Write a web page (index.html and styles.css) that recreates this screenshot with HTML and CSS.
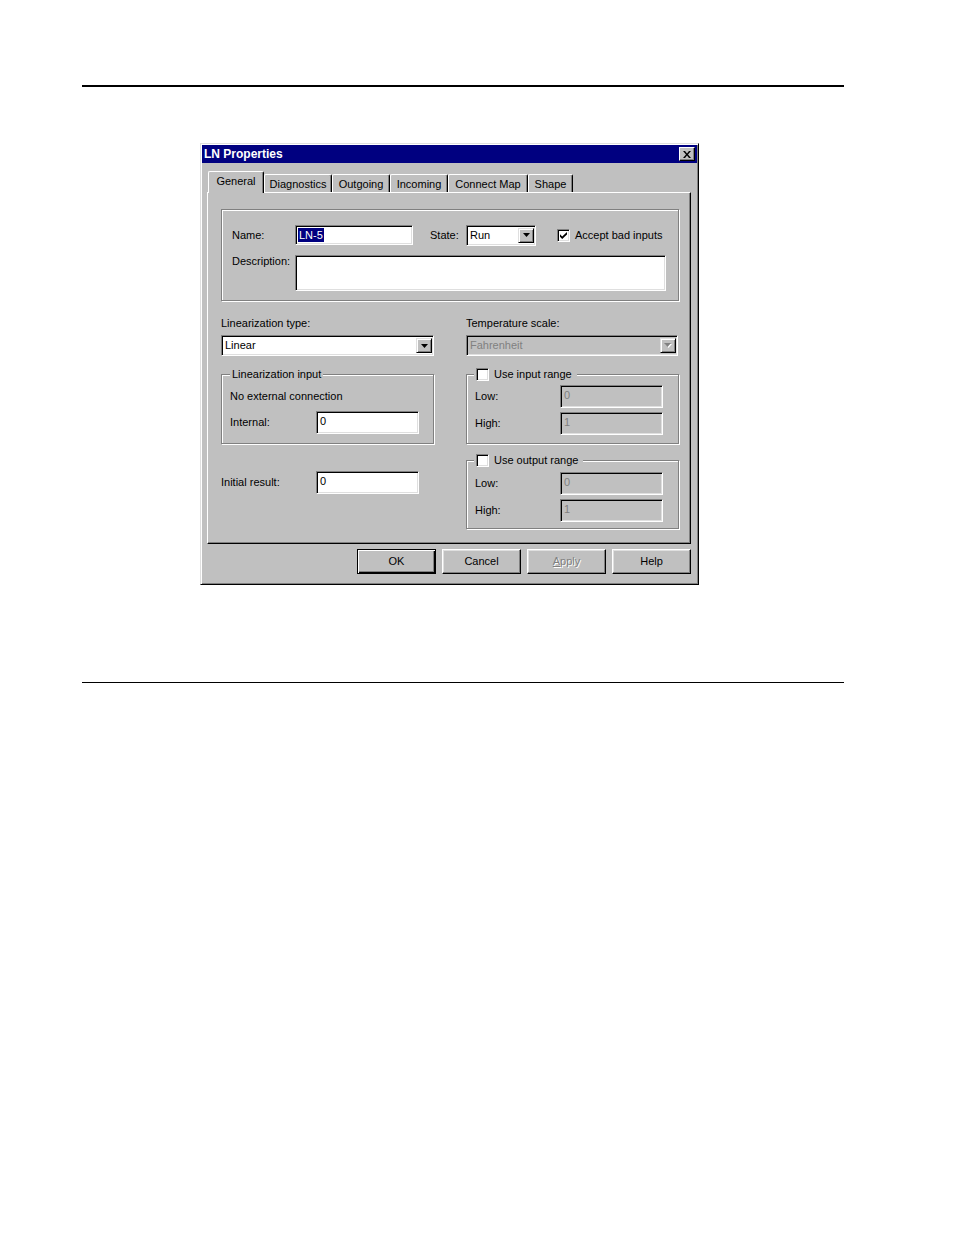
FILE: index.html
```html
<!DOCTYPE html>
<html lang="en">
<head>
<meta charset="utf-8">
<title>LN Properties</title>
<link rel="stylesheet" href="styles.css">
</head>
<body>
<div class="rule rule-top"></div>

<div class="dialog">
  <div class="titlebar">
    <span class="title">LN Properties</span>
    <span class="close">
      <svg width="8" height="7" viewBox="0 0 8 7"><path d="M0 0h2l2 2.4L6 0h2L5 3.5 8 7H6L4 4.6 2 7H0l3-3.5z" fill="#000"/></svg>
    </span>
  </div>

  <div class="tabs">
    <div class="tab tab-sel w-gen">General</div>
    <div class="tab w-diag">Diagnostics</div>
    <div class="tab w-out">Outgoing</div>
    <div class="tab w-inc">Incoming</div>
    <div class="tab w-con">Connect Map</div>
    <div class="tab w-shape">Shape</div>
  </div>

  <div class="panel">
    <fieldset class="grp grp-top">
      <div class="row r1">
        <span class="lbl lbl-name">Name:</span>
        <span class="field f-name"><span class="hl">LN-5</span></span>
        <span class="lbl lbl-state">State:</span>
        <span class="field combo f-state">
          <span class="val">Run</span>
          <span class="drop"><svg width="7" height="4" viewBox="0 0 7 4"><path d="M0 0h7L3.5 4z" fill="#000"/></svg></span>
        </span>
        <span class="chk chk-accept"><svg width="7" height="7" viewBox="0 0 7 7"><path d="M0 2.2 2.2 4.4 7 0v2.6L2.2 7 0 4.8z" fill="#000"/></svg></span>
        <span class="chk-lbl">Accept bad inputs</span>
      </div>
      <div class="row r2">
        <span class="lbl lbl-name">Description:</span>
        <span class="field f-desc"></span>
      </div>
    </fieldset>

    <div class="cols">
      <div class="cell">
        <div class="cap">Linearization type:</div>
        <div class="field combo f-wide">
          <span class="val">Linear</span>
          <span class="drop"><svg width="7" height="4" viewBox="0 0 7 4"><path d="M0 0h7L3.5 4z" fill="#000"/></svg></span>
        </div>
      </div>
      <div class="cell">
        <div class="cap">Temperature scale:</div>
        <div class="field combo f-wide disabled">
          <span class="val">Fahrenheit</span>
          <span class="drop"><svg width="8" height="5" viewBox="0 0 8 5"><path d="M1 1h7L4.5 5z" fill="#fff"/><path d="M0 0h7L3.5 4z" fill="#808080"/></svg></span>
        </div>
      </div>

      <fieldset class="grp grp-lin">
        <legend class="lg lg-lin">Linearization input</legend>
        <div class="note">No external connection</div>
        <div class="row r-int">
          <span class="lbl lbl-int">Internal:</span>
          <span class="field f-num">0</span>
        </div>
      </fieldset>

      <fieldset class="grp grp-rng">
        <legend class="lg lg-rng"><span class="lg-in"><span class="chk"></span>Use input range</span></legend>
        <div class="row">
          <span class="lbl lbl-rng">Low:</span>
          <span class="field f-num disabled">0</span>
        </div>
        <div class="row r-next">
          <span class="lbl lbl-rng">High:</span>
          <span class="field f-num disabled">1</span>
        </div>
      </fieldset>

      <div class="cell init">
        <div class="row">
          <span class="lbl lbl-init">Initial result:</span>
          <span class="field f-num">0</span>
        </div>
      </div>

      <fieldset class="grp grp-rng grp-out">
        <legend class="lg lg-rng"><span class="lg-in"><span class="chk"></span>Use output range</span></legend>
        <div class="row">
          <span class="lbl lbl-rng">Low:</span>
          <span class="field f-num disabled">0</span>
        </div>
        <div class="row r-next">
          <span class="lbl lbl-rng">High:</span>
          <span class="field f-num disabled">1</span>
        </div>
      </fieldset>
    </div>
  </div>

  <div class="buttons">
    <span class="btn btn-default">OK</span>
    <span class="btn">Cancel</span>
    <span class="btn btn-disabled"><u>A</u>pply</span>
    <span class="btn">Help</span>
  </div>
</div>

<div class="rule rule-bottom"></div>
</body>
</html>
```

FILE: styles.css
```css
* { box-sizing: border-box; }

body {
  margin: 0;
  background: #fff;
  color: #000;
  font-family: "Liberation Sans", Arial, sans-serif;
  font-size: 11px;
  line-height: 13px;
}

.rule { margin-left: 82px; width: 762px; background: #000; }
.rule-top { margin-top: 85px; height: 2px; }
.rule-bottom { margin-top: 97px; height: 1px; }

.dialog {
  margin: 56px 0 0 200px;
  width: 499px;
  height: 442px;
  background: #c0c0c0;
  border: 1px solid;
  border-color: #dfdfdf #000 #000 #dfdfdf;
  box-shadow: inset 1px 1px #fff, inset -1px -1px #808080;
  padding: 1px;
  display: flex;
  flex-direction: column;
}

/* title bar */
.titlebar {
  height: 18px;
  flex: none;
  background: #000080;
  display: flex;
  align-items: center;
  padding: 0 2px;
}
.title { color: #fff; font-weight: bold; font-size: 12px; }
.close {
  margin-left: auto;
  width: 16px;
  height: 14px;
  background: #c0c0c0;
  border: 1px solid;
  border-color: #fff #000 #000 #fff;
  box-shadow: inset -1px -1px #808080;
  display: flex;
  align-items: center;
  justify-content: center;
}

/* tabs */
.tabs {
  display: flex;
  align-items: flex-end;
  height: 21px;
  margin: 8px 0 0 6px;
  flex: none;
}
.tab {
  height: 18px;
  display: flex;
  align-items: center;
  justify-content: center;
  padding-top: 1px;
  border-top: 1px solid #fff;
  border-left: 1px solid #fff;
  border-right: 1px solid #000;
  border-radius: 2px 2px 0 0;
  box-shadow: inset -1px 0 #808080;
  background: #c0c0c0;
}
.tab-sel {
  height: 22px;
  margin-bottom: -1px;
  padding-top: 0;
  padding-bottom: 3px;
  position: relative;
  z-index: 1;
}
.w-gen { width: 56px; }
.w-diag { width: 68px; }
.w-out { width: 58px; }
.w-inc { width: 58px; }
.w-con { width: 80px; }
.w-shape { width: 45px; }

/* panel */
.panel {
  flex: none;
  height: 352px;
  margin: 0 6px 0 5px;
  border: 1px solid;
  border-color: #fff #000 #000 #fff;
  box-shadow: inset -1px -1px #808080;
  padding: 16px 11px 0 13px;
}

/* group boxes */
.grp {
  margin: 0;
  min-width: 0;
  border: 1px solid #808080;
  box-shadow: inset 1px 1px #fff, 1px 1px #fff;
}
.lg {
  background: #c0c0c0;
  line-height: 13px;
  height: 13px;
}
.grp-top { padding: 15px 12px 9px 10px; }

.row { display: flex; align-items: center; }
.r1 { height: 20px; }
.r2 { margin-top: 10px; align-items: flex-start; }

.lbl { flex: none; }
.lbl-name { width: 63px; }
.lbl-state { width: 36px; margin-left: 17px; }
.lbl-int { width: 86px; }
.lbl-rng { width: 85px; }
.lbl-init { width: 95px; }

/* fields */
.field {
  flex: none;
  display: flex;
  align-items: flex-start;
  background: #fff;
  border: 1px solid;
  border-color: #808080 #fff #fff #808080;
  box-shadow: inset 1px 1px #000, inset -1px -1px #dfdfdf;
  padding: 2px 2px 0 3px;
}
.field.disabled { background: #c0c0c0; color: #808080; }
.f-name { width: 118px; height: 20px; padding-left: 2px; }
.hl { background: #000080; color: #fff; padding: 1px 1px 0; }
.f-desc { width: 371px; height: 36px; }
.f-num { width: 103px; height: 23px; padding-top: 3px; }

.combo { align-items: stretch; padding: 2px 1px 2px 2px; }
.combo .val { flex: 1; padding: 1px 0 0 1px; }
.drop {
  width: 16px;
  background: #c0c0c0;
  border: 1px solid;
  border-color: #dfdfdf #000 #000 #dfdfdf;
  box-shadow: inset 1px 1px #fff, inset -1px -1px #808080;
  display: flex;
  align-items: center;
  justify-content: center;
}
.f-state { width: 70px; height: 21px; }
.f-wide { width: 213px; height: 21px; }
.f-wide.disabled { width: 212px; }

/* checkbox */
.chk {
  flex: none;
  width: 13px;
  height: 13px;
  background: #fff;
  border: 1px solid;
  border-color: #808080 #fff #fff #808080;
  box-shadow: inset 1px 1px #000, inset -1px -1px #dfdfdf;
  display: flex;
  align-items: center;
  justify-content: center;
}
.chk-accept { margin-left: 21px; }
.chk-lbl { margin-left: 5px; }

/* two column area */
.cols {
  display: grid;
  grid-template-columns: 213px 213px;
  column-gap: 32px;
  align-items: start;
  margin-top: 16px;
}
.cap { height: 13px; margin-bottom: 5px; }

.grp-lin { margin-top: 12px; padding: 9px 8px 9px 8px; }
.lg-lin { padding: 0 2px; }
.note { height: 13px; }
.r-int { margin-top: 8px; }

.grp-rng { margin-top: 12px; padding: 4px 8px 8px 8px; }
.grp-out { margin-top: 10px; padding-top: 5px; padding-bottom: 6px; }
.lg-rng { margin-left: -1px; padding: 0 5px 0 2px; }
.lg-in { display: flex; align-items: center; gap: 5px; }
.r-next { margin-top: 4px; }

.init { margin-top: 27px; }

/* buttons */
.buttons {
  flex: none;
  display: flex;
  justify-content: flex-end;
  gap: 6px;
  margin: 5px 6px 0 0;
}
.btn {
  width: 79px;
  height: 25px;
  display: flex;
  align-items: center;
  justify-content: center;
  border: 1px solid;
  border-color: #fff #000 #000 #fff;
  box-shadow: inset -1px -1px #808080, inset 1px 1px #dfdfdf;
}
.btn-default {
  border-color: #000;
  box-shadow: inset 1px 1px #fff, inset -1px -1px #000, inset -2px -2px #808080;
}
.btn-disabled { color: #808080; text-shadow: 1px 1px #fff; }
```
